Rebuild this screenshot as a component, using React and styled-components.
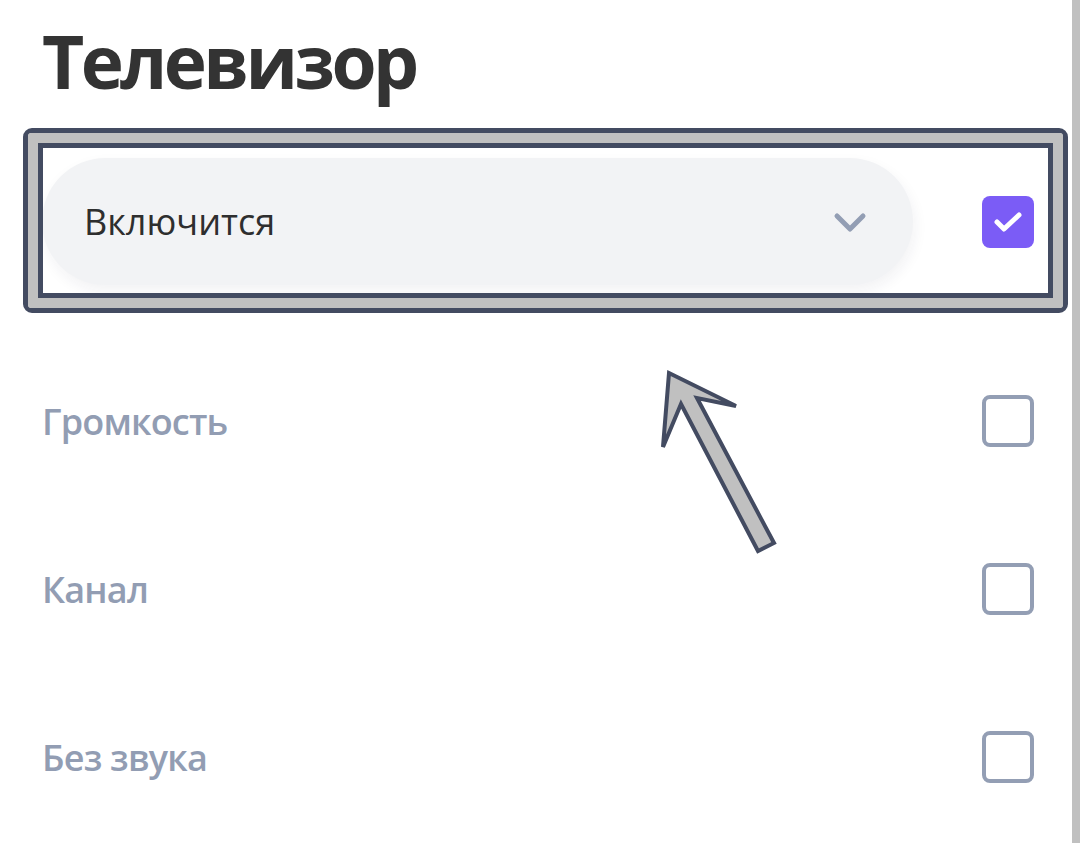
import styled, { createGlobalStyle } from 'styled-components';

const GlobalStyle = createGlobalStyle`
  html, body {
    margin: 0;
    padding: 0;
    background: #ffffff;
  }

  body {
    font-family: "Open Sans", "Noto Sans", sans-serif;
  }
`;

const Page = styled.div`
  position: relative;
  display: flex;
  width: 1080px;
  height: 843px;
  overflow: hidden;
  background: #ffffff;
`;

const Content = styled.div`
  flex: 1;
  padding: 24px 38px 0 42px;
`;

const Scrollbar = styled.div`
  width: 8px;
  background: #c0c0c0;
`;

const Title = styled.h1`
  margin: 0;
  font-size: 73px;
  line-height: 74px;
  font-weight: 700;
  color: #333333;
  letter-spacing: -3.6px;
`;

const List = styled.div`
  display: flex;
  flex-direction: column;
  margin-top: 60px;
`;

const SelectRow = styled.div`
  position: relative;
  display: flex;
  align-items: center;
  justify-content: space-between;
  height: 127px;
  margin-bottom: 52px;
`;

const Select = styled.div`
  display: flex;
  align-items: center;
  justify-content: space-between;
  box-sizing: border-box;
  width: 871px;
  height: 127px;
  padding: 0 46px 0 42px;
  border-radius: 64px;
  background: #f2f3f5;
  box-shadow: 2px 6px 14px rgba(30, 40, 70, 0.06);
  font-size: 36px;
  font-weight: 500;
  color: #2e2e2e;
`;

const OptionRow = styled.div`
  display: flex;
  align-items: center;
  justify-content: space-between;
  height: 168px;
`;

const Label = styled.span`
  font-size: 36px;
  font-weight: 600;
  color: #929db3;
  letter-spacing: -0.8px;
`;

const Checkbox = styled.div`
  display: flex;
  align-items: center;
  justify-content: center;
  box-sizing: border-box;
  width: 52px;
  height: 52px;
  border-radius: 8px;
  background: ${(p) => (p.checked ? '#7b5cf6' : '#ffffff')};
  border: ${(p) => (p.checked ? 'none' : '4px solid #939eb4')};
`;

const Highlight = styled.div`
  position: absolute;
  left: -19px;
  right: -34px;
  top: -30px;
  bottom: -28px;
  border: 5px solid #434b61;
  border-radius: 9px;
  pointer-events: none;
`;

const HighlightBand = styled.div`
  height: 100%;
  box-sizing: border-box;
  border: 10px solid #c0c0c0;
  border-radius: 3px;
`;

const HighlightInner = styled.div`
  height: 100%;
  box-sizing: border-box;
  border: 5px solid #434b61;
`;

const Arrow = styled.svg`
  position: absolute;
  left: 650px;
  top: 360px;
  width: 140px;
  height: 200px;
  pointer-events: none;
`;

const options = ['Громкость', 'Канал', 'Без звука'];

function Chevron() {
  return (
    <svg width="34" height="22" viewBox="0 0 34 22">
      <path
        d="M4 5 L17 18 L30 5"
        fill="none"
        stroke="#939eb4"
        strokeWidth="5"
        strokeLinecap="round"
        strokeLinejoin="round"
      />
    </svg>
  );
}

function Check() {
  return (
    <svg width="32" height="26" viewBox="0 0 32 26">
      <path
        d="M5 13 L12 20 L27 6"
        fill="none"
        stroke="#ffffff"
        strokeWidth="5"
        strokeLinecap="round"
        strokeLinejoin="round"
      />
    </svg>
  );
}

export default function App() {
  return (
    <Page>
      <GlobalStyle />
      <Content>
        <Title>Телевизор</Title>
        <List>
          <SelectRow>
            <Select>
              Включится
              <Chevron />
            </Select>
            <Checkbox checked>
              <Check />
            </Checkbox>
            <Highlight>
              <HighlightBand>
                <HighlightInner />
              </HighlightBand>
            </Highlight>
          </SelectRow>
          {options.map((option) => (
            <OptionRow key={option}>
              <Label>{option}</Label>
              <Checkbox />
            </OptionRow>
          ))}
        </List>
      </Content>
      <Scrollbar />
      <Arrow viewBox="0 0 140 200">
        <polygon
          points="19,13 86,46 47,38 124,183 108,191 31,44 13,87"
          fill="#c0c0c0"
          stroke="#434b61"
          strokeWidth="4"
          strokeLinejoin="miter"
        />
      </Arrow>
    </Page>
  );
}
